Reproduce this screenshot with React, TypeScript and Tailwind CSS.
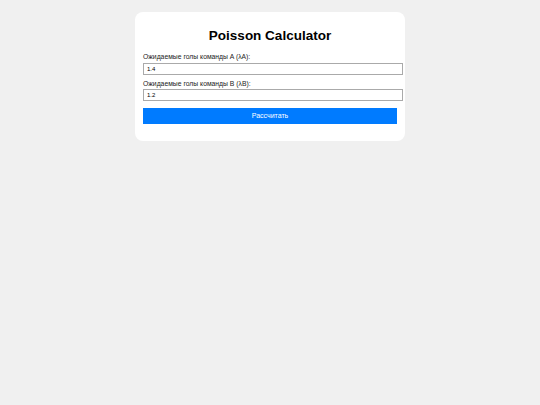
export default function App() {
  return (
    <div className="min-h-[405px] bg-[#f0f0f0] pt-3 font-['Liberation_Sans',Arial,sans-serif]">
      <div className="mx-auto w-[270px] rounded-lg bg-white px-2 pb-[17px] pt-4">
        <h1 className="mb-[9px] text-center text-[13.5px] font-bold leading-[16px] text-black">Poisson Calculator</h1>
        <label className="block text-[6.8px] leading-[8px] text-[#222]">Ожидаемые голы команды A (λA):</label>
        <input
          defaultValue="1.4"
          className="mt-[2px] mb-[5px] block h-[12px] w-[260px] border border-[#aaa] px-[3px] text-[6px] text-black"
        />
        <label className="block text-[6.8px] leading-[8px] text-[#222]">Ожидаемые голы команды B (λB):</label>
        <input
          defaultValue="1.2"
          className="mt-[1px] block h-[12px] w-[260px] border border-[#aaa] px-[3px] text-[6px] text-black"
        />
        <button className="mt-[7px] block h-[16px] w-full bg-[#007bff] text-[7px] text-white">Рассчитать</button>
      </div>
    </div>
  )
}
